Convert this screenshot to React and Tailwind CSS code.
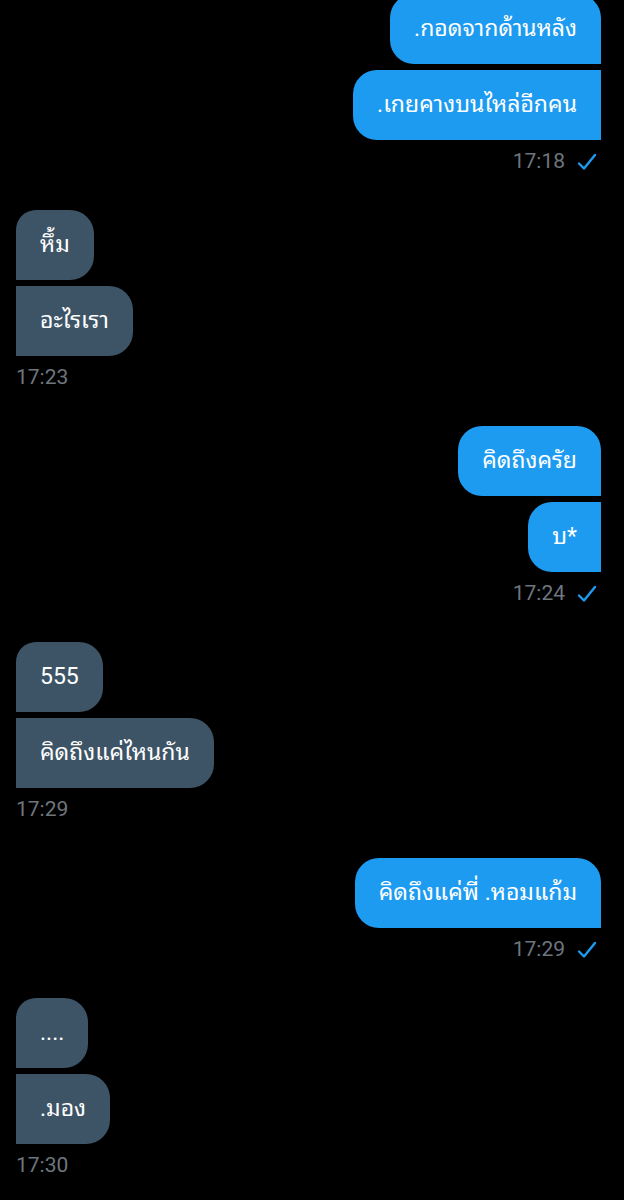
const groups = [
  { side: 'right', time: '17:18', msgs: ['.กอดจากด้านหลัง', '.เกยคางบนไหล่อีกคน'] },
  { side: 'left', time: '17:23', msgs: ['หึ้ม', 'อะไรเรา'] },
  { side: 'right', time: '17:24', msgs: ['คิดถึงครัย', 'บ*'] },
  { side: 'left', time: '17:29', msgs: ['555', 'คิดถึงแค่ไหนกัน'] },
  { side: 'right', time: '17:29', msgs: ['คิดถึงแค่พี่ .หอมแก้ม'] },
  { side: 'left', time: '17:30', msgs: ['....', '.มอง'] },
]

const Check = () => (
  <svg width="20" height="18" viewBox="0 0 20 18" fill="none">
    <path d="M2 10.5 L7 15.5 L18 2" stroke="#1d9bf0" strokeWidth="2.4" strokeLinecap="round" strokeLinejoin="round" />
  </svg>
)

const Bubble = ({ side, first, text }) => {
  const base = 'h-[70px] flex items-center px-6 text-[23px] text-white whitespace-nowrap'
  if (side === 'right') {
    return (
      <div
        className={`${base} bg-[#1d9bf0] rounded-l-[24px] ${first ? 'rounded-tr-[24px]' : ''}`}
      >
        {text}
      </div>
    )
  }
  return (
    <div
      className={`${base} bg-[#3d5466] rounded-r-[24px] ${first ? 'rounded-tl-[20px]' : ''}`}
    >
      {text}
    </div>
  )
}

export default function App() {
  return (
    <div
      className="min-h-[1200px] w-full bg-black overflow-hidden pl-4 pr-[23px]"
      style={{
        fontFamily:
          'Roboto, "Noto Sans Thai Looped", Loma, Garuda, "Tlwg Typo", Norasi, "Noto Sans Thai", "Noto Sans", sans-serif',
      }}
    >
      <div className="-mt-[6px] flex flex-col gap-[36px]">
        {groups.map((g, i) => (
          <div
            key={i}
            className={`flex flex-col gap-[6px] ${g.side === 'right' ? 'items-end' : 'items-start'}`}
          >
            {g.msgs.map((m, j) => (
              <Bubble key={j} side={g.side} first={j === 0} text={m} />
            ))}
            <div
              className={`mt-[4px] h-6 flex items-center gap-3 text-[21px] text-[#6e767d] ${
                g.side === 'right' ? 'pr-1' : ''
              }`}
            >
              <span>{g.time}</span>
              {g.side === 'right' && <Check />}
            </div>
          </div>
        ))}
      </div>
    </div>
  )
}
